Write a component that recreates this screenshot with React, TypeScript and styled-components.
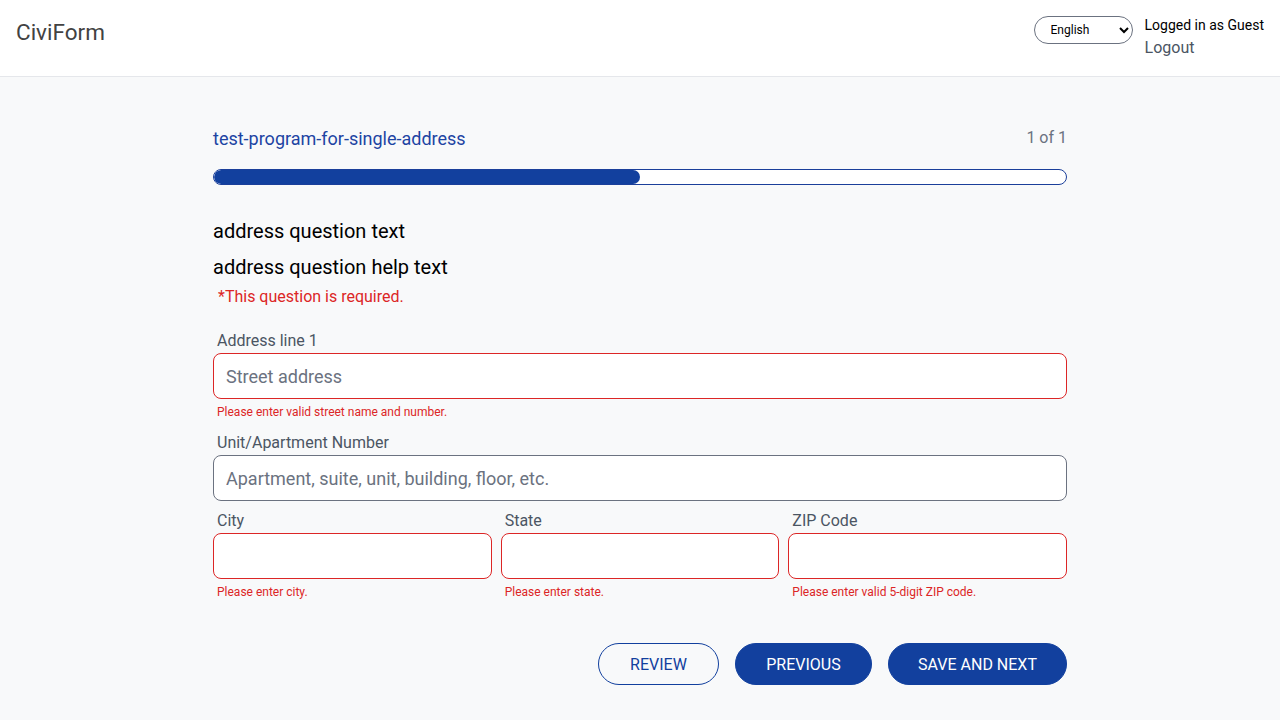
import React from "react";
import styled, { createGlobalStyle } from "styled-components";

const Global = createGlobalStyle`
  html, body { margin: 0; padding: 0; }
  body {
    font-family: Roboto, "Liberation Sans", sans-serif;
    background: #f8f9fa;
    color: #000;
  }
  * { box-sizing: border-box; }
`;

const Page = styled.div`
  min-height: 720px;
  background: #f8f9fa;
`;

const Header = styled.header`
  height: 77px;
  background: #fff;
  border-bottom: 1px solid #e5e7eb;
  display: flex;
  align-items: flex-start;
  justify-content: space-between;
  padding: 0 16px;
`;

const Brand = styled.div`
  font-size: 22.5px;
  color: #424242;
  margin-top: 19px;
`;

const HeaderRight = styled.div`
  display: flex;
  align-items: flex-start;
  gap: 12px;
  margin-top: 16px;
`;

const LangSelect = styled.select`
  width: 99px;
  height: 28px;
  border: 1px solid #6b7280;
  border-radius: 14px;
  background: #fff;
  font-family: inherit;
  font-size: 12px;
  padding: 0 4px 0 12px;
  color: #000;
`;

const UserBox = styled.div`
  display: flex;
  flex-direction: column;
`;

const UserLine = styled.span`
  font-size: 14px;
  line-height: 18px;
  color: #000;
`;

const LogoutLink = styled.a`
  font-size: 16px;
  line-height: 28px;
  color: #4b5563;
`;

const Main = styled.main`
  width: 854px;
  margin: 0 auto;
  padding-top: 50px;
`;

const TitleRow = styled.div`
  display: flex;
  justify-content: space-between;
  align-items: flex-start;
`;

const ProgramTitle = styled.div`
  font-size: 18px;
  line-height: 24px;
  color: #1d44a3;
`;

const Counter = styled.div`
  font-size: 16px;
  line-height: 22px;
  color: #6b7280;
`;

const Progress = styled.div`
  margin-top: 18px;
  height: 16px;
  border: 1px solid #1b3f9a;
  border-radius: 8px;
  background: #fff;
  overflow: hidden;
`;

const ProgressFill = styled.div`
  height: 100%;
  background: #12409e;
  border-radius: 8px;
`;

const QuestionText = styled.div`
  font-size: 20px;
  line-height: 24px;
  margin-top: 34px;
`;

const HelpText = styled.div`
  font-size: 20px;
  line-height: 24px;
  margin-top: 12px;
`;

const Required = styled.div`
  font-size: 16px;
  line-height: 20px;
  color: #dc2626;
  margin: 8px 0 0 5px;
`;

const Field = styled.div<{ $mt?: number }>`
  display: flex;
  flex-direction: column;
  margin-top: ${(p) => p.$mt ?? 0}px;
  min-width: 0;
`;

const Label = styled.label`
  font-size: 16px;
  line-height: 20px;
  color: #4b5563;
  margin: 0 0 2px 4px;
`;

const Input = styled.input<{ $error?: boolean }>`
  height: 46px;
  width: 100%;
  border: 1px solid ${(p) => (p.$error ? "#dc2626" : "#6b7280")};
  border-radius: 8px;
  background: #fff;
  padding: 0 12px;
  font-family: inherit;
  font-size: 18px;
  &::placeholder { color: #6b7280; }
`;

const ErrorText = styled.div`
  font-size: 12px;
  line-height: 16px;
  color: #dc2626;
  margin: 5px 0 0 4px;
`;

const Row3 = styled.div`
  display: grid;
  grid-template-columns: 1fr 1fr 1fr;
  gap: 9px;
  margin-top: 10px;
`;

const Actions = styled.div`
  display: flex;
  justify-content: flex-end;
  gap: 16px;
  margin-top: 43px;
`;

const Btn = styled.button<{ $outline?: boolean; $w: number }>`
  height: 42px;
  width: ${(p) => p.$w}px;
  border-radius: 21px;
  border: 1px solid #12409e;
  background: ${(p) => (p.$outline ? "transparent" : "#12409e")};
  color: ${(p) => (p.$outline ? "#12409e" : "#fff")};
  font-family: inherit;
  font-size: 16px;
  text-transform: uppercase;
  cursor: pointer;
`;

export default function App() {
  return (
    <Page>
      <Global />
      <Header>
        <Brand>CiviForm</Brand>
        <HeaderRight>
          <LangSelect defaultValue="en">
            <option value="en">English</option>
          </LangSelect>
          <UserBox>
            <UserLine>Logged in as Guest</UserLine>
            <LogoutLink>Logout</LogoutLink>
          </UserBox>
        </HeaderRight>
      </Header>
      <Main>
        <TitleRow>
          <ProgramTitle>test-program-for-single-address</ProgramTitle>
          <Counter>1 of 1</Counter>
        </TitleRow>
        <Progress>
          <ProgressFill style={{ width: "50%" }} />
        </Progress>
        <QuestionText>address question text</QuestionText>
        <HelpText>address question help text</HelpText>
        <Required>*This question is required.</Required>
        <Field $mt={24}>
          <Label>Address line 1</Label>
          <Input $error placeholder="Street address" />
          <ErrorText>Please enter valid street name and number.</ErrorText>
        </Field>
        <Field $mt={13}>
          <Label>Unit/Apartment Number</Label>
          <Input placeholder="Apartment, suite, unit, building, floor, etc." />
        </Field>
        <Row3>
          <Field>
            <Label>City</Label>
            <Input $error />
            <ErrorText>Please enter city.</ErrorText>
          </Field>
          <Field>
            <Label>State</Label>
            <Input $error />
            <ErrorText>Please enter state.</ErrorText>
          </Field>
          <Field>
            <Label>ZIP Code</Label>
            <Input $error />
            <ErrorText>Please enter valid 5-digit ZIP code.</ErrorText>
          </Field>
        </Row3>
        <Actions>
          <Btn $outline $w={121}>Review</Btn>
          <Btn $w={137}>Previous</Btn>
          <Btn $w={179}>Save and next</Btn>
        </Actions>
      </Main>
    </Page>
  );
}
